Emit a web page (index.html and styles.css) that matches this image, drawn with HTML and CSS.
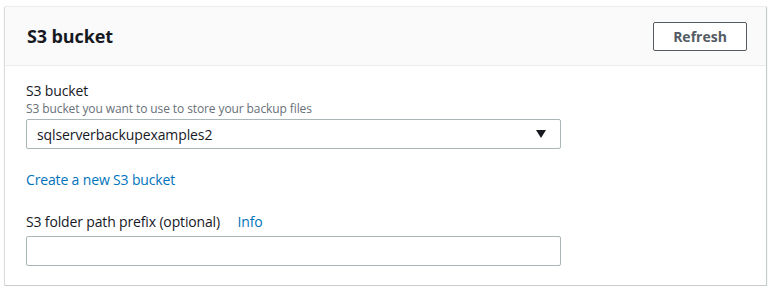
FILE: index.html
```html
<!DOCTYPE html>
<html>
<head>
<meta charset="utf-8">
<link rel="stylesheet" href="styles.css">
</head>
<body>
<div class="card">
  <div class="card-header">
    <h2 class="title">S3 bucket</h2>
    <button class="btn">Refresh</button>
  </div>
  <div class="card-body">
    <div class="field">
      <div class="label">S3 bucket</div>
      <div class="desc">S3 bucket you want to use to store your backup files</div>
      <div class="select">
        <span>sqlserverbackupexamples2</span>
        <svg class="caret" width="10" height="8" viewBox="0 0 10 8"><path d="M0 0 H10 L5 8 Z" fill="#16191f"/></svg>
      </div>
    </div>
    <a class="link" href="#">Create a new S3 bucket</a>
    <div class="field field-prefix">
      <div class="label">S3 folder path prefix (optional) <a class="info" href="#">Info</a></div>
      <div class="input"></div>
    </div>
  </div>
</div>
</body>
</html>
```
FILE: styles.css
```css
html, body { margin: 0; padding: 0; background: #fff; }
body {
  font-family: "Open Sans", "Liberation Sans", sans-serif;
  color: #16191f;
  padding: 6px 14px 0 5px;
}
.card {
  width: 761px;
  height: 280px;
  box-sizing: border-box;
  border-top: 1px solid #eaeded;
  border-bottom: 1px solid #c6cbcc;
  box-shadow: 0 1px 1px 0 rgba(0,28,36,.2), 1px 1px 1px 0 rgba(0,28,36,.2), -1px 1px 1px 0 rgba(0,28,36,.12);
  background: #fff;
}
.card-header {
  height: 59px;
  box-sizing: border-box;
  background: #fafafa;
  border-bottom: 1px solid #eaeded;
  display: flex;
  align-items: center;
  justify-content: space-between;
  padding: 0 19px 0 22px;
}
.title {
  margin: 0;
  font-size: 18px;
  font-weight: 700;
  line-height: 22px;
  letter-spacing: -0.1px;
}
.btn {
  width: 94px;
  height: 29px;
  border: 1px solid #545b64;
  border-radius: 2px;
  background: #fff;
  color: #545b64;
  font-family: inherit;
  font-size: 14px;
  font-weight: 700;
  padding: 0;
  margin-top: 1px;
}
.card-body {
  padding: 15px 20px 0 21px;
  display: flex;
  flex-direction: column;
  align-items: flex-start;
}
.field { display: flex; flex-direction: column; }
.label { font-size: 14px; line-height: 20px; letter-spacing: -0.15px; }
.desc { font-size: 12px; line-height: 16px; color: #687078; letter-spacing: -0.1px; }
.select, .input {
  width: 535px;
  height: 30px;
  box-sizing: border-box;
  border: 1px solid #aab7b8;
  border-radius: 2px;
  background: #fff;
}
.select {
  margin-top: 2px;
  display: flex;
  align-items: center;
  justify-content: space-between;
  padding: 0 14px 0 10px;
  font-size: 14px;
  letter-spacing: -0.1px;
}
.link {
  color: #0073bb;
  text-decoration: none;
  font-size: 14px;
  line-height: 20px;
  margin-top: 21px;
  letter-spacing: -0.15px;
}
.field-prefix { margin-top: 22px; }
.info {
  color: #0073bb;
  text-decoration: none;
  margin-left: 14px;
}
.input { margin-top: 4px; }
```
